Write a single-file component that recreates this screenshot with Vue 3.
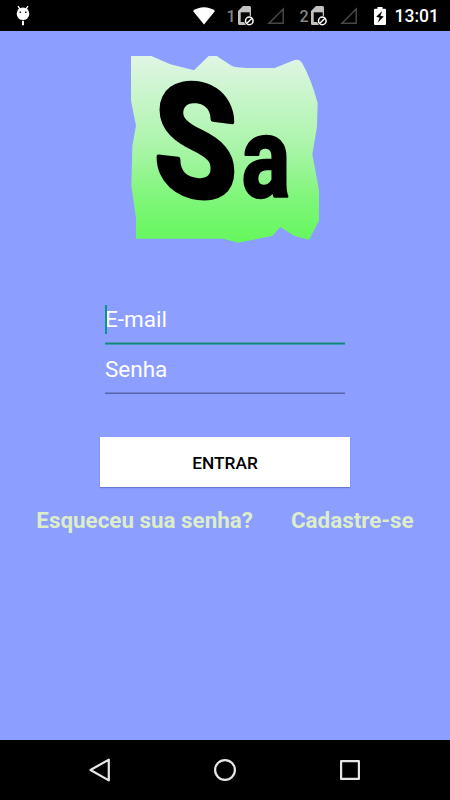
<script setup>
import { ref } from 'vue'

const email = ref('')
const senha = ref('')
const sims = [1, 2]
</script>

<template>
  <div class="phone">
    <header class="status-bar">
      <svg class="debug-icon" width="14" height="21" viewBox="0 0 14 21">
        <path d="M2 1.2L4 4M12 1.2L10 4" stroke="#fff" stroke-width="1.3" />
        <circle cx="7" cy="8.7" r="6.3" fill="#fff" />
        <path d="M3.6 6.6h1.5v1.5H3.6zM9 6.6h1.5v1.5H9z" fill="#222" />
        <path d="M6 15.8h2v4.5H6z" fill="#fff" />
      </svg>
      <svg class="wifi-icon" width="22" height="18" viewBox="0 0 22 18">
        <path d="M0 4C6.2-.9 15.8-.9 22 4L11 17.6z" fill="#fff" />
      </svg>
      <div v-for="sim in sims" :key="sim" class="sim">
        <span class="sim-number">{{ sim }}</span>
        <svg class="sim-icon" width="17" height="20" viewBox="0 0 17 20">
          <path d="M5 0H11.5Q13 0 13 1.5V17.5Q13 19 11.5 19H1.5Q0 19 0 17.5V5z" fill="#c2c2c2" />
          <path d="M2.7 6.3h9V16h-9z" fill="#050505" />
          <circle cx="11.3" cy="14.9" r="5.1" fill="#000" />
          <circle cx="11.3" cy="14.9" r="3.8" fill="none" stroke="#fff" stroke-width="1.5" />
          <path d="M8.6 17.6l5.4-5.4" stroke="#fff" stroke-width="1.4" />
        </svg>
        <svg class="signal-icon" width="18" height="18" viewBox="0 0 18 18">
          <path d="M2 16.2H16.2V2z" fill="none" stroke="#484848" stroke-width="1.5" />
        </svg>
      </div>
      <svg class="battery-icon" width="12" height="18" viewBox="0 0 12 18">
        <path d="M3.5 0h5v1.8H11q1 0 1 1V17q0 1-1 1H1q-1 0-1-1V2.8q0-1 1-1h2.5z" fill="#fff" />
        <path d="M8.2 4L2.2 9.8L5.6 10.8L3.6 15.8L9.8 9.6L6.4 8.8z" fill="#000" />
      </svg>
      <span class="clock">13:01</span>
    </header>

    <main class="login">
      <svg class="logo" width="210" height="205" viewBox="0 0 630 615">
        <defs>
          <linearGradient id="paper" x1="0" y1="0" x2="0" y2="1">
            <stop offset="0" stop-color="#e0f6e5" />
            <stop offset="0.22" stop-color="#c8f5ca" />
            <stop offset="0.5" stop-color="#a8f5a7" />
            <stop offset="0.75" stop-color="#80f67b" />
            <stop offset="1" stop-color="#65f75d" />
          </linearGradient>
        </defs>
        <path
          d="M33 33H94L151 58L222 76L266 33H290L336 63Q350 69 405 69H464L518 47Q537 40 546 53Q573 100 593 174L591 245L577 328L597 435V527L567 584L523 573L481 546L457 573L354 593L310 581H48V520L34 422L37 303L48 242L33 167z"
          fill="url(#paper)"
        />
        <text class="logo-letter big" transform="translate(227 287) skewX(7) rotate(7) scale(.85 1)" y="167">S</text>
        <text class="logo-letter small" transform="translate(438 457) scale(.8 1)">a</text>
      </svg>

      <form class="form" @submit.prevent>
        <div class="field active">
          <input v-model="email" type="email" placeholder="E-mail" />
          <span class="caret"></span>
        </div>
        <div class="field">
          <input v-model="senha" type="password" placeholder="Senha" />
        </div>
        <button class="enter" type="submit">ENTRAR</button>
      </form>

      <div class="links">
        <a>Esqueceu sua senha?</a>
        <a>Cadastre-se</a>
      </div>
    </main>

    <nav class="nav-bar">
      <svg width="24" height="26" viewBox="0 0 24 26">
        <path d="M2.5 13L20.8 2.6V23.4z" fill="none" stroke="#e6e6e6" stroke-width="2.2" stroke-linejoin="round" />
      </svg>
      <svg width="24" height="24" viewBox="0 0 24 24">
        <circle cx="12" cy="12" r="9.9" fill="none" stroke="#e6e6e6" stroke-width="2.2" />
      </svg>
      <svg width="24" height="24" viewBox="0 0 24 24">
        <rect x="3.1" y="3.1" width="17.8" height="17.8" fill="none" stroke="#e6e6e6" stroke-width="2.2" stroke-linejoin="round" />
      </svg>
    </nav>
  </div>
</template>

<style>
body {
  margin: 0;
}
</style>

<style scoped>
.phone {
  display: flex;
  flex-direction: column;
  width: 450px;
  height: 800px;
  overflow: hidden;
  background: #8c9eff;
  font-family: Roboto, sans-serif;
}

.status-bar {
  display: flex;
  align-items: center;
  box-sizing: border-box;
  height: 31px;
  padding: 0 11px 0 16px;
  background: #000;
  flex-shrink: 0;
}

.wifi-icon {
  margin-left: auto;
  margin-right: 12px;
}

.sim {
  display: flex;
  align-items: center;
  margin-right: 15px;
}

.sim-number {
  width: 11px;
  color: #858585;
  font-size: 16px;
  font-weight: 500;
  line-height: 20px;
  padding-top: 3px;
}

.sim-icon {
  margin-right: 12px;
}

.battery-icon {
  margin-left: 1px;
  margin-right: 9px;
}

.clock {
  color: #fff;
  font-size: 17.5px;
  font-weight: 500;
  line-height: 31px;
  padding-top: 1px;
}

.login {
  display: flex;
  flex-direction: column;
  align-items: center;
  flex: 1;
  padding-top: 14px;
}

.logo {
  display: block;
  flex-shrink: 0;
  overflow: visible;
}

.logo-letter {
  text-anchor: middle;
  font-family: Roboto, sans-serif;
  font-weight: 700;
  fill: #000;
  stroke: #000;
  stroke-linejoin: round;
}

.logo-letter.big {
  font-size: 473px;
  stroke-width: 14px;
}

.logo-letter.small {
  font-size: 342px;
  stroke-width: 8px;
}

.form {
  display: flex;
  flex-direction: column;
  align-items: center;
  width: 250px;
  margin-top: 45px;
}

.field {
  position: relative;
  box-sizing: border-box;
  width: 240px;
  height: 50px;
  padding-bottom: 1px;
}

.field::after {
  content: '';
  display: block;
  height: 1px;
  background: #5764a5;
  border-top: 1px solid #7180cf;
}

.field.active::after {
  background: #148779;
  border-top: 1px solid #5593bd;
  border-bottom: 1px solid #409cb5;
}

.field input {
  display: block;
  box-sizing: border-box;
  width: 100%;
  height: 47px;
  padding: 1px 0 0;
  border: 0;
  outline: 0;
  background: transparent;
  color: #fff;
  font-family: inherit;
  font-size: 22.5px;
}

.field input::placeholder {
  color: #fff;
  opacity: 1;
}

.caret {
  position: absolute;
  left: 0;
  top: 10px;
  width: 2px;
  height: 29px;
  background: #099688;
}

.enter {
  width: 250px;
  height: 50px;
  margin-top: 42px;
  padding: 2px 0 0;
  border: 0;
  background: #fff;
  box-shadow: 0 1px 1px rgba(50, 60, 140, 0.4);
  color: #000;
  font-family: inherit;
  font-size: 17.3px;
  font-weight: 500;
}

.links {
  display: flex;
  gap: 38px;
  margin-top: 20px;
  color: #dcedc8;
  font-size: 22.4px;
  font-weight: 700;
  line-height: 27px;
  white-space: nowrap;
}

.nav-bar {
  display: flex;
  justify-content: space-between;
  align-items: center;
  box-sizing: border-box;
  height: 60px;
  padding: 0 88px;
  background: #000;
  flex-shrink: 0;
}
</style>
